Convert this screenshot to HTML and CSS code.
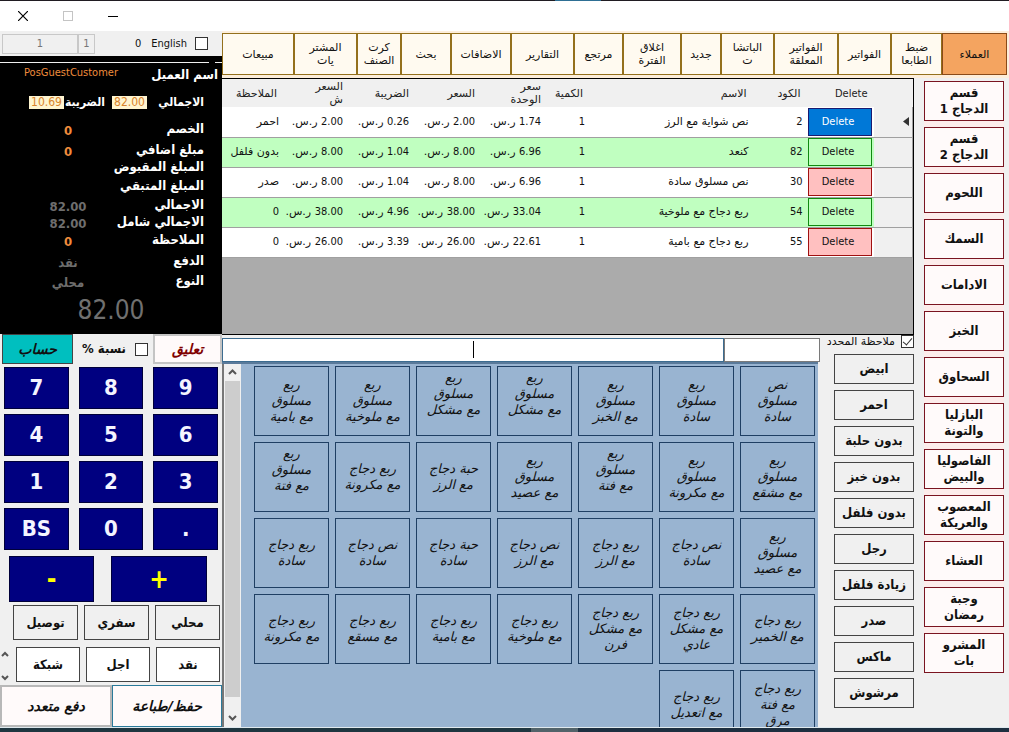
FILE: index.html
```html
<!DOCTYPE html>
<html lang="ar">
<head>
<meta charset="utf-8">
<title>نقطة البيع</title>
<link rel="stylesheet" href="styles.css">
</head>
<body>
<div class="desk-top"></div>
<header class="titlebar">
  <button class="win" aria-label="Close"><svg width="10" height="10" viewBox="0 0 10 10"><path d="M0 0L10 10M10 0L0 10" stroke="#000" stroke-width="1.2"/></svg></button>
  <button class="win" aria-label="Maximize"><svg width="10" height="10" viewBox="0 0 10 10"><rect x=".5" y=".5" width="9" height="9" fill="none" stroke="#c4c4c4"/></svg></button>
  <button class="win" aria-label="Minimize"><svg width="10" height="10" viewBox="0 0 10 10"><path d="M0 5.5H10" stroke="#000"/></svg></button>
</header>
<main class="app">
  <aside class="side">
    <div class="meta">
      <input class="meta-a" value="1" aria-label="Invoice" disabled>
      <input class="meta-b" value="1" aria-label="Shift" disabled>
      <span class="meta-zero">0</span>
      <label class="meta-lang" for="english">English</label>
      <input class="check" type="checkbox" id="english">
    </div>
    <section class="summary">
      <div class="row name"><span class="val">PosGuestCustomer</span><span class="lab">اسم العميل</span></div>
      <div class="row totals"><span class="box">10.69</span><span class="lab tax">الضريبة</span><span class="box">82.00</span><span class="lab">الاجمالي</span></div>
      <div class="row"><b class="val">0</b><span class="lab">الخصم</span></div>
      <div class="row"><b class="val">0</b><span class="lab">مبلغ اضافي</span></div>
      <div class="row"><span class="val"></span><span class="lab">المبلغ المقبوض</span></div>
      <div class="row"><span class="val"></span><span class="lab">المبلغ المتبقي</span></div>
      <div class="row dim"><b class="val">82.00</b><span class="lab">الاجمالي</span></div>
      <div class="row dim"><b class="val">82.00</b><span class="lab">الاجمالي شامل</span></div>
      <div class="row"><b class="val">0</b><span class="lab">الملاحظة</span></div>
      <div class="row dim"><b class="val">نقد</b><span class="lab">الدفع</span></div>
      <div class="row dim"><b class="val">محلي</b><span class="lab">النوع</span></div>
      <div class="grand">82.00</div>
    </section>
    <div class="actions">
      <button class="account">حساب</button>
      <label class="ratio" for="ratio">نسبة %</label>
      <input class="check" type="checkbox" id="ratio">
      <button class="hold">تعليق</button>
    </div>
    <div class="keypad">
      <button>7</button><button>8</button><button>9</button>
      <button>4</button><button>5</button><button>6</button>
      <button>1</button><button>2</button><button>3</button>
      <button>BS</button><button>0</button><button>.</button>
    </div>
    <div class="signs"><button class="minus">-</button><button class="plus">+</button></div>
    <div class="choice types"><button>توصيل</button><button>سفري</button><button>محلي</button></div>
    <div class="choice pays">
      <span class="spin">
        <svg width="8" height="6" viewBox="0 0 8 6"><path d="M1 5L4 2L7 5" fill="none" stroke="#555" stroke-width="2"/></svg>
        <svg width="8" height="6" viewBox="0 0 8 6"><path d="M1 1L4 4L7 1" fill="none" stroke="#555" stroke-width="2"/></svg>
      </span>
      <button>شبكة</button><button>اجل</button><button>نقد</button>
    </div>
    <div class="final"><button>دفع متعدد</button><button class="save">حفظ/طباعة</button></div>
  </aside>

  <section class="work">
    <nav class="menu">
      <button>مبيعات</button><button>المشتر<br>يات</button><button>كرت<br>الصنف</button><button>بحث</button><button>الاضافات</button><button>التقارير</button><button>مرتجع</button><button>اغلاق<br>الفترة</button><button>جديد</button><button>الباتشا<br>ت</button><button>الفواتير<br>المعلقة</button><button>الفواتير</button><button>ضبط<br>الطابعا</button><button class="on">العملاء</button>
    </nav>
    <div class="body">
      <div class="center">
        <div class="grid-box">
          <table class="orders" dir="rtl">
            <colgroup><col class="c-head"><col class="c-del"><col class="c-code"><col class="c-name"><col class="c-qty"><col class="c-num"><col class="c-num"><col class="c-num"><col class="c-num"><col class="c-note"></colgroup>
            <thead><tr><th></th><th class="n">Delete</th><th>الكود</th><th>الاسم</th><th>الكمية</th><th>سعر<br>الوحدة</th><th>السعر</th><th>الضريبة</th><th>السعر<br>ش</th><th>الملاحظة</th></tr></thead>
            <tbody>
              <tr><td class="rh"><svg width="6" height="9" viewBox="0 0 6 9"><path d="M6 0V9L0 4.500Z" fill="#333"/></svg></td><td class="dc"><button class="del sel">Delete</button></td><td class="n">2</td><td>نص شواية مع الرز</td><td class="n">1</td><td><bdi class="n">1.74</bdi> ر.س.</td><td><bdi class="n">2.00</bdi> ر.س.</td><td><bdi class="n">0.26</bdi> ر.س.</td><td><bdi class="n">2.00</bdi> ر.س.</td><td>احمر</td></tr>
              <tr class="alt"><td class="rh"></td><td class="dc"><button class="del ok">Delete</button></td><td class="n">82</td><td>كنعد</td><td class="n">1</td><td><bdi class="n">6.96</bdi> ر.س.</td><td><bdi class="n">8.00</bdi> ر.س.</td><td><bdi class="n">1.04</bdi> ر.س.</td><td><bdi class="n">8.00</bdi> ر.س.</td><td>بدون فلفل</td></tr>
              <tr><td class="rh"></td><td class="dc"><button class="del">Delete</button></td><td class="n">30</td><td>نص مسلوق سادة</td><td class="n">1</td><td><bdi class="n">6.96</bdi> ر.س.</td><td><bdi class="n">8.00</bdi> ر.س.</td><td><bdi class="n">1.04</bdi> ر.س.</td><td><bdi class="n">8.00</bdi> ر.س.</td><td>صدر</td></tr>
              <tr class="alt"><td class="rh"></td><td class="dc"><button class="del ok">Delete</button></td><td class="n">54</td><td>ربع دجاج مع ملوخية</td><td class="n">1</td><td><bdi class="n">33.04</bdi> ر.س.</td><td><bdi class="n">38.00</bdi> ر.س.</td><td><bdi class="n">4.96</bdi> ر.س.</td><td><bdi class="n">38.00</bdi> ر.س.</td><td class="n">0</td></tr>
              <tr><td class="rh"></td><td class="dc"><button class="del">Delete</button></td><td class="n">55</td><td>ربع دجاج مع بامية</td><td class="n">1</td><td><bdi class="n">22.61</bdi> ر.س.</td><td><bdi class="n">26.00</bdi> ر.س.</td><td><bdi class="n">3.39</bdi> ر.س.</td><td><bdi class="n">26.00</bdi> ر.س.</td><td class="n">0</td></tr>
            </tbody>
          </table>
        </div>
        <div class="lower">
          <div class="shop">
            <div class="search">
              <div class="find"><input type="text" aria-label="بحث"><span class="caret"></span></div>
              <input class="code" type="text" aria-label="كود">
            </div>
            <div class="catalog">
              <div class="scroll">
                <svg width="17" height="17" viewBox="0 0 17 17"><path d="M5 10L8.500 6.500L12 10" fill="none" stroke="#555" stroke-width="2"/></svg>
                <span class="thumb"></span>
                <svg width="17" height="17" viewBox="0 0 17 17"><path d="M5 6L8.500 9.500L12 6" fill="none" stroke="#555" stroke-width="2"/></svg>
              </div>
              <div class="items" dir="rtl">
                <button>نص<br>مسلوق<br>سادة</button><button>ربع<br>مسلوق<br>سادة</button><button>ربع<br>مسلوق<br>مع الخبز</button><button class="up">ربع<br>مسلوق<br>مع مشكل</button><button class="up">ربع<br>مسلوق<br>مع مشكل</button><button>ربع<br>مسلوق<br>مع ملوخية</button><button>ربع<br>مسلوق<br>مع بامية</button>
                <button>ربع<br>مسلوق<br>مع مشقع</button><button>ربع<br>مسلوق<br>مع مكرونة</button><button class="up">ربع<br>مسلوق<br>مع فتة</button><button>ربع<br>مسلوق<br>مع عصيد</button><button>حبة دجاج<br>مع الرز</button><button>ربع دجاج<br>مع مكرونة</button><button class="up">ربع<br>مسلوق<br>مع فتة</button>
                <button>ربع<br>مسلوق<br>مع عصيد</button><button>نص دجاج<br>سادة</button><button>ربع دجاج<br>مع الرز</button><button>نص دجاج<br>مع الرز</button><button>حبة دجاج<br>سادة</button><button>نص دجاج<br>سادة</button><button>ربع دجاج<br>سادة</button>
                <button>ربع دجاج<br>مع الخمير</button><button>ربع دجاج<br>مع مشكل<br>عادي</button><button>ربع دجاج<br>مع مشكل<br>فرن</button><button>ربع دجاج<br>مع ملوخية</button><button>ربع دجاج<br>مع بامية</button><button>ربع دجاج<br>مع مسقع</button><button>ربع دجاج<br>مع مكرونة</button>
                <button>ربع دجاج<br>مع فتة<br>مرق</button><button>ربع دجاج<br>مع اتعديل</button>
              </div>
            </div>
          </div>
          <div class="notes">
            <div class="pick"><label for="pick">ملاحظة المحدد</label><input class="check" type="checkbox" id="pick" checked></div>
            <button>ابيض</button><button>احمر</button><button>بدون حلبة</button><button>بدون خبز</button><button>بدون فلفل</button><button>رجل</button><button>زيادة فلفل</button><button>صدر</button><button>ماكس</button><button>مرشوش</button>
          </div>
        </div>
      </div>
      <div class="cats">
        <div class="cat-list" dir="rtl">
          <button>قسم<br>الدجاج 1</button><button>قسم<br>الدجاج 2</button><button>اللحوم</button><button>السمك</button><button>الادامات</button><button>الخبز</button><button>السحاوق</button><button>البازليا<br>والتونة</button><button>الفاصوليا<br>والبيض</button><button>المعصوب<br>والعريكة</button><button>العشاء</button><button>وجبة<br>رمضان</button><button>المشرو<br>بات</button>
        </div>
      </div>
    </div>
  </section>
</main>
<footer class="taskbar"></footer>
</body>
</html>
```
FILE: styles.css
```css
* { box-sizing: border-box; }
body {
  margin: 0;
  height: 100vh;
  display: flex;
  flex-direction: column;
  overflow: hidden;
  background: #f0f0f0;
  color: #111;
  font: 11px/14px "DejaVu Sans", sans-serif;
}
button, input { font: inherit; color: inherit; margin: 0; padding: 0; border-radius: 0; }
button { border: 1px solid #444; background: #f0f0f0; min-width: 0; }
svg { display: block; }
.n, .del, .side, .notes button, .cat-list button { font-family: "DejaVu Sans Condensed", "DejaVu Sans", sans-serif; }

.desk-top { height: 1px; background: linear-gradient(90deg, #201c22 55%, #2e6f94 55%, #2e6f94 59.6%, #201c22 59.6%); }
.titlebar { height: 30px; display: flex; background: #fff; }
.win { width: 45px; border: 0; background: none; display: flex; align-items: center; justify-content: center; }
.app { flex: 1; min-height: 0; display: flex; }
.taskbar { height: 5px; border-top: 1px solid #dfe9ee; background: linear-gradient(90deg, #1f3640 52.6%, #52636a 52.6%, #52636a 57.3%, #1d2f40 57.3%); }

.check {
  appearance: none;
  width: 13px;
  height: 13px;
  border: 1px solid #333;
  background: #fff;
  flex: none;
}
.check:checked { position: relative; }
.check:checked::after {
  content: "";
  position: absolute;
  left: 3px;
  top: 0;
  width: 4px;
  height: 8px;
  border: solid #333;
  border-width: 0 1px 1px 0;
  transform: rotate(40deg);
}

/* left side */
.side { width: 222px; flex: none; display: flex; flex-direction: column; }
.meta { height: 25px; padding: 0 14px 0 2px; display: flex; align-items: center; }
.meta input:disabled { height: 20px; border: 1px solid #c8c8c8; outline: 0; background: #f0f0f0; color: #777; text-align: center; }
.meta-a { width: 76px; }
.meta-b { width: 17px; }
.meta-zero { margin-left: auto; }
.meta-lang { margin: 0 8px 0 10px; }

.summary {
  height: 278px;
  padding-top: 6px;
  color: #fff;
  display: grid;
  grid-template-rows: 26px 28px 26px 15px 19px 19px 20px 14px 22px 20px 20px 38px;
  background: linear-gradient(90deg, #eee 94%, #000 94%, #000 97%, #eee 97%) 0 6px / 100% 1px no-repeat #000;
}
.row { display: flex; align-items: center; padding-right: 18px; }
.val { width: 136px; margin-right: -136px; padding-top: 4px; text-align: center; color: #f08c3c; font-size: 13px; }
.lab { flex: 1; direction: rtl; font-weight: bold; font-size: 13px; white-space: nowrap; }
.dim .val { color: #6e6e6e; }
.name { padding-right: 4px; }
.name .val { font-size: 11px; padding: 0 0 4px 6px; }
.totals { padding-left: 29px; }
.totals .lab { font-size: 12px; }
.box { width: 35px; line-height: 13px; background: #fff5d0; color: #d8842c; text-align: center; flex: none; font-size: 12px; }
.totals .tax { flex: none; width: 48px; padding-right: 7px; }
.grand { text-align: center; font-size: 26px; line-height: 38px; color: #707070; }

.actions { display: flex; align-items: center; height: 30px; padding-left: 2px; }
.account, .hold, .final button { font: italic bold 14px/16px "DejaVu Sans", sans-serif; }
.account { width: 71px; height: 30px; background: #00bfbf; }
.ratio { flex: 1; text-align: center; font-weight: bold; font-size: 13px; direction: rtl; }
.hold { width: 69px; height: 30px; margin-left: 5px; background: #fffafa; border: 2px solid #c4c4c4; color: #800000; }

.keypad { display: grid; grid-template-columns: repeat(3, 1fr); gap: 5px 10px; padding: 3px 4px 0; grid-auto-rows: 42px; }
.keypad button, .signs button { background: #000080; border: 1px solid #00003a; color: #f4f4ff; font-weight: bold; font-size: 22px; line-height: 26px; }
.signs { display: flex; justify-content: space-between; padding: 6px 15px 0 9px; height: 52px; }
.signs .minus { width: 85px; color: #ff0; font-size: 26px; }
.signs .plus { width: 96px; color: #ff0; font-size: 26px; }
.choice { display: flex; gap: 6px; height: 42px; }
.choice button { flex: 1; height: 35px; font-weight: bold; font-size: 13px; }
.types { padding: 3px 2px 0 13px; height: 45px; }
.pays { padding: 0 2px 0 1px; height: 38px; }
.pays button { background: #fff; }
.spin { width: 9px; padding: 4px 0; display: flex; flex-direction: column; justify-content: space-between; }
.final { flex: 1; display: flex; }
.final button { flex: 1; background: #fffafa; border: 2px solid #b8b8b8; }
.final .save { border: 1px solid #2a7a9a; }

/* right side */
.work { flex: 1; min-width: 0; display: flex; flex-direction: column; }
.menu {
  height: 47px;
  padding: 2px 2px 3px 0;
  background: #fdeedb;
  display: grid;
  grid-template-columns: 72fr 63fr 44fr 50fr 60fr 63fr 49fr 58fr 40fr 53fr 64fr 53fr 51fr 65fr;
}
.menu button { background: #fffaf0; border: 1px solid #94701c; line-height: 13px; }
.menu .on { background: #f4a460; border-color: #8a4a18; }
.body { flex: 1; min-height: 0; display: flex; }
.center { flex: 1; min-width: 0; display: flex; flex-direction: column; }
.grid-box { height: 257px; background: #ababab; border: solid #000; border-width: 1px 1px 1px 0; }
.orders { width: 100%; table-layout: fixed; border-collapse: collapse; background: #fff; }
.c-head { width: 39px; }
.c-del { width: 67px; }
.c-code { width: 54px; }
.c-qty { width: 42px; }
.c-num { width: 66px; }
.c-note { width: 61px; }
.orders th { height: 28px; padding: 0 6px 0 0; background: #f0f0f0; font-weight: normal; line-height: 13px; text-align: right; color: #222; white-space: nowrap; }
.orders td { height: 30px; padding: 0 4px 0 0; border-bottom: 1px solid #a0a0a0; white-space: nowrap; }
.orders td:nth-child(n+6):nth-child(-n+9) { padding-right: 6px; }
.orders .alt td { background: #c0ffc0; }
.orders .rh, .orders .alt .rh { background: #f0f0f0; padding: 0 3px 0 0; border-right: 1px solid #a0a0a0; }
.orders .dc { padding: 0 2px 0 0; }
.del { display: block; width: 64px; height: 28px; padding-right: 3px; background: #ffc0c0; border: 1px solid #a01010; }
.del.ok { background: #c0ffc0; border-color: #108a10; }
.del.sel { background: #0078d7; border-color: #1a1a70; color: #fff; }

.lower { flex: 1; min-height: 0; display: flex; }
.shop { flex: 1; min-width: 0; display: flex; flex-direction: column; }
.search { display: flex; height: 27px; padding-top: 3px; }
.search input { border: 1px solid #7a7a7a; background: #fff; outline: 0; }
.find { flex: 1; position: relative; display: flex; }
.find input { width: 100%; text-align: center; border-color: #3c6c90; caret-color: transparent; }
.caret { position: absolute; left: 50%; top: 3px; width: 1px; height: 17px; background: #000; }
.code { width: 96px; }
.catalog { flex: 1; min-height: 0; display: flex; overflow: hidden; background: #99b4d1; border-top: 2px solid #5a7a9a; margin-right: 2px; }
.scroll { width: 19px; flex: none; display: flex; flex-direction: column; background: #f0f0f0; border-left: 2px solid #777; }
.thumb { flex: 1; background: #cdcdcd; margin: 0 1px; }
.scroll svg:last-child { margin: 13px 0 0; }
.items { flex: 1; display: grid; grid-template-columns: repeat(7, 1fr); grid-auto-rows: 70px; gap: 6px; padding: 2px 3px 0 13px; }
.items button { background: none; border: 1px solid #1f3f63; font-style: italic; font-size: 13px; line-height: 16px; }
.items .up { padding-bottom: 14px; }

.notes { width: 94px; flex: none; display: flex; flex-direction: column; gap: 6px; padding-left: 14px; }
.pick { height: 13px; margin-left: -12px; display: flex; align-items: center; justify-content: flex-end; gap: 6px; white-space: nowrap; }
.notes button { height: 30px; font-weight: bold; font-size: 13px; }

.cats { width: 95px; flex: none; padding: 3px 5px 0 10px; }
.cat-list { display: grid; grid-auto-rows: 40px; gap: 6px; background: #fdeceb; }
.cat-list button { background: #fffafa; border: 1px solid #7a1420; font-weight: bold; font-size: 13px; line-height: 16px; }
```
